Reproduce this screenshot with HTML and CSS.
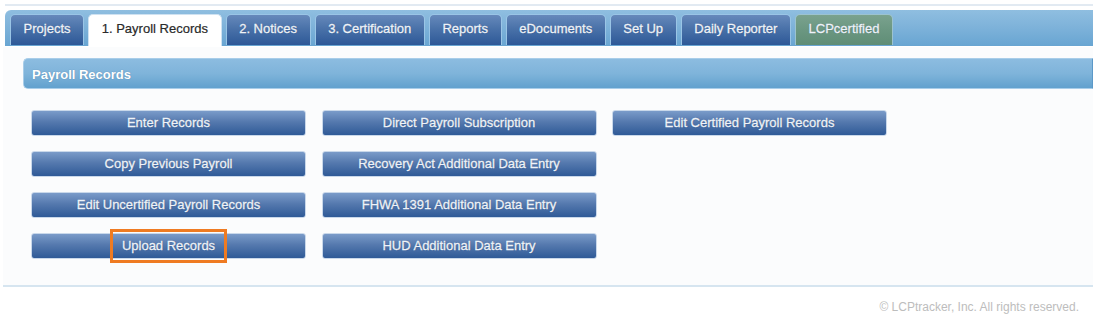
FILE: index.html
```html
<!DOCTYPE html>
<html>
<head>
<meta charset="utf-8">
<link rel="stylesheet" href="styles.css">
</head>
<body>
<div class="topline"></div>
<nav class="tabbar">
  <div class="tab">Projects</div>
  <div class="tab active">1. Payroll Records</div>
  <div class="tab">2. Notices</div>
  <div class="tab">3. Certification</div>
  <div class="tab">Reports</div>
  <div class="tab">eDocuments</div>
  <div class="tab">Set Up</div>
  <div class="tab">Daily Reporter</div>
  <div class="tab green">LCPcertified</div>
</nav>
<section class="panel">
  <div class="panel-header">Payroll Records</div>
  <div class="buttons">
    <div class="btn">Enter Records</div>
    <div class="btn">Copy Previous Payroll</div>
    <div class="btn">Edit Uncertified Payroll Records</div>
    <div class="btn">Upload Records<span class="highlight"></span></div>
    <div class="btn">Direct Payroll Subscription</div>
    <div class="btn">Recovery Act Additional Data Entry</div>
    <div class="btn">FHWA 1391 Additional Data Entry</div>
    <div class="btn">HUD Additional Data Entry</div>
    <div class="btn">Edit Certified Payroll Records</div>
  </div>
</section>
<footer class="footer">© LCPtracker, Inc. All rights reserved.</footer>
</body>
</html>
```

FILE: styles.css
```css
html, body {
  margin: 0;
  padding: 0;
  background: #ffffff;
  font-family: "Liberation Sans", Arial, sans-serif;
}

.topline {
  margin: 4px 0 0 5px;
  width: 1088px;
  height: 2px;
  background: #e2eaf2;
}

.tabbar {
  margin: 4px 0 0 5px;
  width: 1083px;
  height: 32px;
  padding: 4px 0 0 5px;
  display: flex;
  align-items: flex-start;
  gap: 4px;
  background: linear-gradient(to bottom, #8fbee0 0%, #7fb3da 45%, #68a5d2 100%);
  border-radius: 6px 0 0 0;
}

.tab {
  box-sizing: border-box;
  height: 31px;
  padding: 0 12.6px;
  line-height: 28px;
  font-size: 13px;
  color: #eef3f9;
  -webkit-text-stroke: 0.3px #eef3f9;
  text-shadow: 0 0 1px rgba(20, 40, 80, 0.6);
  white-space: nowrap;
  border: 1px solid #9ac5e6;
  border-bottom: none;
  border-radius: 5px 5px 0 0;
  background: linear-gradient(to bottom, #6689bb 0%, #4a72a9 45%, #2d5897 100%);
}

.tab.active {
  height: 32px;
  background: #ffffff;
  color: #2a2a2a;
  -webkit-text-stroke: 0.2px #2a2a2a;
  text-shadow: none;
  border-color: #cfe2f1;
}

.tab.green {
  background: linear-gradient(to bottom, #7aa28e 0%, #6b9781 50%, #5f8d76 100%);
  border-color: #9cc3cf;
}

.panel {
  margin: 1px 0 0 3px;
  width: 1070px;
  padding: 11px 0 26px 20px;
  background: #fbfcfd;
  border-bottom: 2px solid #d6e5f0;
}

.panel-header {
  box-sizing: border-box;
  height: 31px;
  padding-left: 8px;
  line-height: 31px;
  font-size: 13px;
  font-weight: bold;
  color: #ffffff;
  text-shadow: 0 0 1px rgba(40, 80, 120, 0.5);
  background: linear-gradient(to bottom, #8cbce0 0%, #7fb4da 50%, #62a1ce 100%);
  border: 1px solid #a8cde9;
  border-right-color: #5b98c8;
  border-radius: 5px 0 0 5px;
}

.buttons {
  margin: 21px 0 0 8px;
  display: grid;
  grid-template-rows: repeat(4, 26px);
  grid-auto-flow: column;
  grid-auto-columns: 275px;
  column-gap: 15.5px;
  row-gap: 15px;
}

.btn {
  position: relative;
  box-sizing: border-box;
  height: 26px;
  line-height: 24px;
  text-align: center;
  font-size: 13px;
  color: #eef3f9;
  -webkit-text-stroke: 0.3px #eef3f9;
  text-shadow: 0 0 1px rgba(20, 40, 80, 0.7);
  white-space: nowrap;
  border: 1px solid #c9d8ea;
  border-radius: 3px;
  background: linear-gradient(to bottom, #7a9bc9 0%, #5579ae 45%, #2f5a97 100%);
}

.highlight {
  position: absolute;
  left: 78px;
  top: -5px;
  width: 117px;
  height: 34px;
  box-sizing: border-box;
  border: 3px solid #ef7b22;
}

.footer {
  margin-top: 13px;
  padding-right: 19px;
  text-align: right;
  font-size: 12px;
  line-height: 14px;
  color: #bdbdbd;
}
```
